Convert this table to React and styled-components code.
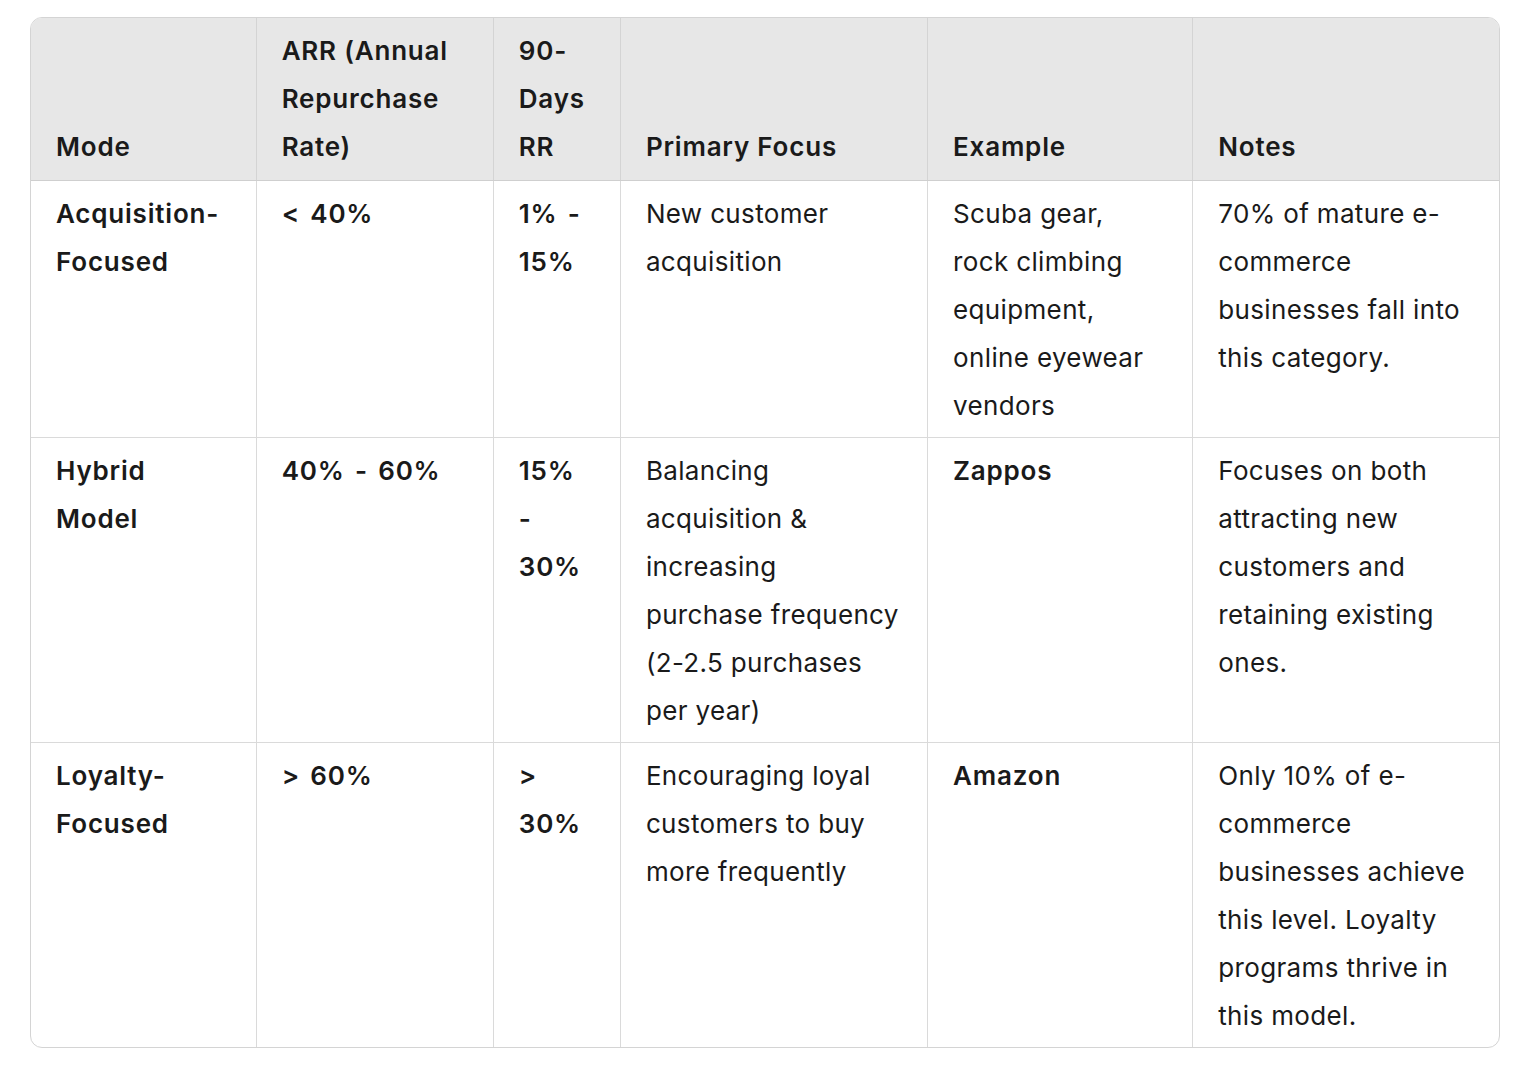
import React from 'react';
import styled, { createGlobalStyle } from 'styled-components';

const GlobalStyle = createGlobalStyle`
  body {
    margin: 0;
    background: #ffffff;
    font-family: Inter, "Noto Sans", sans-serif;
    color: #1a1a1a;
  }
`;

const Page = styled.div`
  padding: 17px 0 0 30px;
`;

const TableWrap = styled.div`
  width: 1470px;
  box-sizing: border-box;
  border: 1.5px solid #d4d4d4;
  border-radius: 12px;
  overflow: hidden;
`;

const Table = styled.table`
  width: 100%;
  border-collapse: collapse;
  table-layout: fixed;
  font-size: 26px;
  line-height: 48px;
`;

const HeadCell = styled.th`
  background: #e7e7e7;
  font-weight: 600;
  letter-spacing: 0.8px;
  text-align: left;
  vertical-align: bottom;
  padding: 9px 26px 9px 25px;
  border-bottom: 1.5px solid #cfcfcf;
  border-left: 1.5px solid #d4d4d4;
  &:first-child { border-left: none; }
`;

const Cell = styled.td`
  font-weight: ${p => (p.$bold ? 600 : 400)};
  letter-spacing: ${p => (p.$bold ? '0.8px' : '0.35px')};
  word-spacing: ${p => (p.$bold ? '3px' : '0')};
  vertical-align: top;
  padding: 9px 26px 7px 25px;
  border-top: 1.5px solid #dadada;
  border-left: 1.5px solid #dadada;
  &:first-child { border-left: none; }
  tr:first-child > & { border-top: none; }
`;

const columns = [
  { label: 'Mode', width: 225 },
  { label: 'ARR (Annual Repurchase Rate)', width: 237 },
  { label: '90-Days RR', width: 127 },
  { label: 'Primary Focus', width: 307 },
  { label: 'Example', width: 265 },
  { label: 'Notes', width: 306 },
];

const rows = [
  {
    mode: 'Acquisition-Focused',
    arr: '< 40%',
    rr: '1% - 15%',
    focus: 'New customer acquisition',
    example: 'Scuba gear, rock climbing equipment, online eyewear vendors',
    exampleBold: false,
    notes: '70% of mature e-commerce businesses fall into this category.',
  },
  {
    mode: 'Hybrid Model',
    arr: '40% - 60%',
    rr: '15% - 30%',
    focus: 'Balancing acquisition & increasing purchase frequency (2-2.5 purchases per year)',
    example: 'Zappos',
    exampleBold: true,
    notes: 'Focuses on both attracting new customers and retaining existing ones.',
  },
  {
    mode: 'Loyalty-Focused',
    arr: '> 60%',
    rr: '> 30%',
    focus: 'Encouraging loyal customers to buy more frequently',
    example: 'Amazon',
    exampleBold: true,
    notes: 'Only 10% of e-commerce businesses achieve this level. Loyalty programs thrive in this model.',
  },
];

const App = () => {
  return (
    <Page>
      <GlobalStyle />
      <TableWrap>
        <Table>
          <colgroup>
            {columns.map(c => (
              <col key={c.label} style={{ width: c.width }} />
            ))}
          </colgroup>
          <thead>
            <tr>
              {columns.map(c => (
                <HeadCell key={c.label}>{c.label}</HeadCell>
              ))}
            </tr>
          </thead>
          <tbody>
            {rows.map(r => (
              <tr key={r.mode}>
                <Cell $bold>{r.mode}</Cell>
                <Cell $bold>{r.arr}</Cell>
                <Cell $bold>{r.rr}</Cell>
                <Cell>{r.focus}</Cell>
                <Cell $bold={r.exampleBold}>{r.example}</Cell>
                <Cell>{r.notes}</Cell>
              </tr>
            ))}
          </tbody>
        </Table>
      </TableWrap>
    </Page>
  );
};

export default App;
